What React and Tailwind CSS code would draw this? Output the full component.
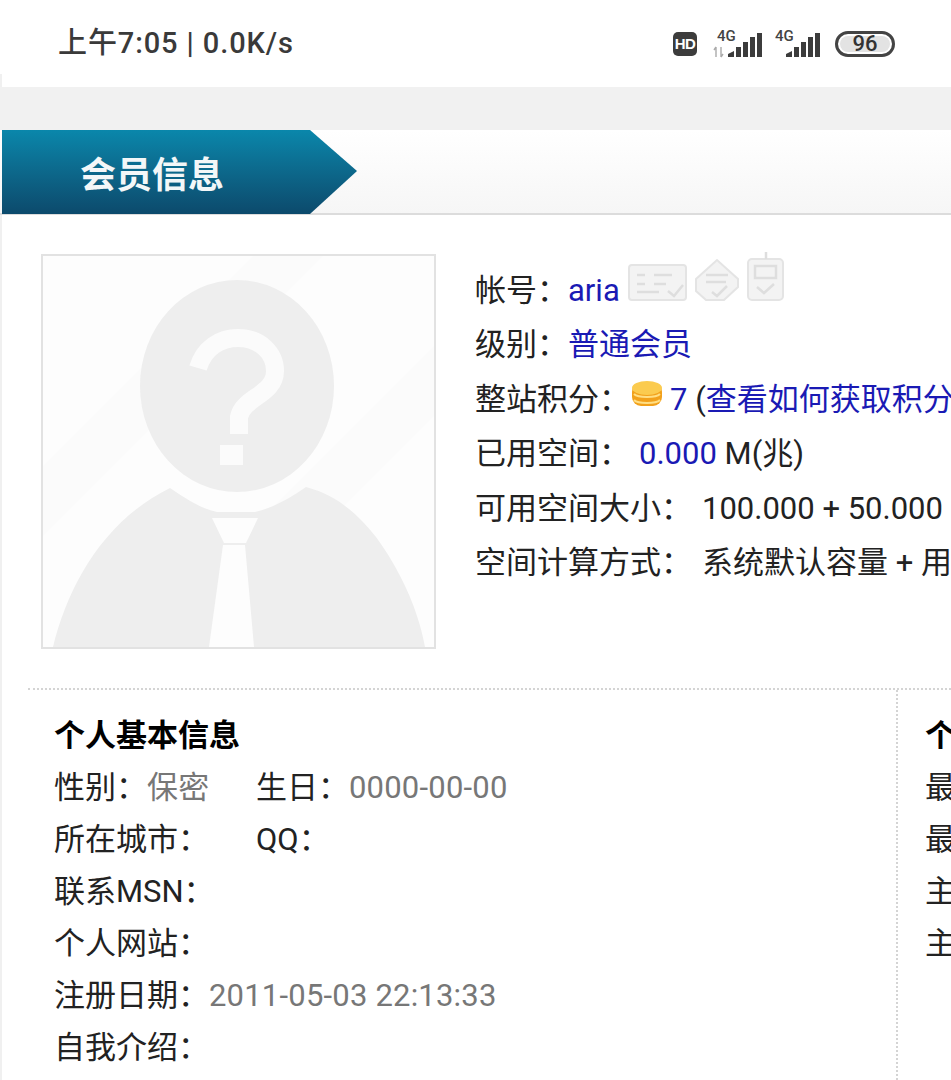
import React from 'react'

const FONT = 'font-["Roboto","Noto_Sans_CJK_SC",sans-serif]'

// signal bars with the small 4G label on top
const Signal = ({ arrows = false }) => (
  <svg width={arrows ? 50 : 46} height="28" viewBox={arrows ? '0 0 50 28' : '0 0 46 28'} className="block overflow-visible">
    <text x={arrows ? 4 : 0} y="11" fontSize="15" fontWeight="500" fill="#444" fontFamily="Roboto, sans-serif">4G</text>
    {arrows && (
      <path d="M3 27V17M1 20l2-3M8 17v10M8 27l2-3" stroke="#aaa" strokeWidth="1.4" fill="none" />
    )}
    <g fill="#3c3c3c" transform={arrows ? 'translate(14 0)' : 'translate(10 0)'}>
      <path d="M1 27v-3l6-3v6z" />
      <rect x="9" y="17" width="5" height="10" />
      <rect x="16" y="12" width="5" height="15" />
      <rect x="23" y="7" width="5" height="20" />
      <rect x="30" y="3" width="5" height="24" />
    </g>
  </svg>
)

const StatusBar = () => (
  <div className="relative h-[87px] bg-white flex items-center justify-between pl-[58px] pr-[56px]">
    <div className="absolute left-0 top-[74px] w-[2px] h-[13px] bg-[#f0f0f0]" />
    <span className="mt-[1px] text-[29px] text-[#3a3a3a] font-medium tracking-[0.9px]">上午7:05 | 0.0K/s</span>
    <div className="flex items-center">
      <span className="w-[24px] h-[24px] rounded-[5px] bg-[#3c3c3c] text-white text-[15px] font-bold leading-[24px] text-center tracking-[-0.5px] font-['Liberation_Sans',sans-serif]">HD</span>
      <span className="ml-[16px]"><Signal arrows /></span>
      <span className="ml-[12px]"><Signal /></span>
      <span className="ml-[14px] w-[60px] h-[26px] rounded-full border-[3px] border-[#444] p-[2px] flex">
        <span className="w-full rounded-full bg-[#e3e3e3] text-[#333] text-[22px] leading-[16px] text-center font-medium">96</span>
      </span>
    </div>
  </div>
)

const Banner = () => (
  <div className="h-[85px] bg-gradient-to-b from-white to-[#f6f6f6] border-b-2 border-[#dcdcdc]">
    <div className="w-[355px] h-[84px] ml-[2px] pl-[78px] pt-[8px] flex items-center bg-gradient-to-b from-[#0a87ab] to-[#0c4a6c] [clip-path:polygon(0_0,308px_0,355px_41px,308px_84px,0_84px)]">
      <span className="text-[36px] font-bold text-[#f3f7f8] leading-none">会员信息</span>
    </div>
  </div>
)

const Avatar = () => (
  <div className="w-[395px] h-[395px] border-2 border-[#e2e2e2] shrink-0">
    <svg viewBox="0 0 391 391" className="block w-full h-full bg-[#fdfdfd]">
      <path d="M0 210L210 0h70L0 280zM391 90L90 391h70L391 160z" fill="#fbfbfb" />
      <ellipse cx="194" cy="130" rx="97" ry="106" fill="#eeeeee" />
      <path d="M155 112c6-20 22-30 40-30 22 0 37 15 37 33 0 24-32 26-36 46v17" stroke="#fbfbfb" strokeWidth="18" fill="none" />
      <rect x="177" y="189" width="23" height="20" fill="#fbfbfb" />
      <path d="M10 391C25 330 60 265 127 232c18 12 30 20 47 24h38c18-4 35-14 51-25 30 8 50 25 70 50 22 30 42 70 49 110z" fill="#eeeeee" />
      <path d="M169 262h46l-12 25h-22z" fill="#fdfdfd" />
      <path d="M180 289h22l9 102h-45z" fill="#fdfdfd" />
    </svg>
  </div>
)

// faded verify badges after the account name
const VerifyIcons = () => (
  <svg width="158" height="50" viewBox="0 0 158 50" className="inline-block align-baseline ml-[8px] -mt-[24px]">
    <g fill="#f3f3f3" stroke="#e4e4e4" strokeWidth="2">
      <rect x="1" y="14" width="57" height="35" rx="3" />
      <path d="M68 28L89 9l21 19v8L96 49H78L68 40z" />
      <rect x="120" y="8" width="35" height="41" rx="4" />
    </g>
    <g stroke="#dedede" strokeWidth="2.5" fill="none">
      <path d="M9 24h8M26 24h18M9 33h8M26 33h12M9 41h22M40 40l6 5 9-11" />
      <path d="M78 24h22M78 31h20M84 41l5 4 10-10" />
      <path d="M138 8V1M127 15h21v12h-21zM129 36l7 6 10-9" />
    </g>
  </svg>
)

const Coin = () => (
  <svg width="32" height="27" viewBox="0 0 32 27" className="inline-block align-[3px] ml-[1px] mr-[7px]">
    <rect x="1" y="3" width="30" height="23" rx="9" fill="#f2a11b" />
    <ellipse cx="16" cy="8" rx="15" ry="7" fill="#fbcb4f" />
    <path d="M3 14c4 4 22 4 26 0M3 20c4 4 22 4 26 0" stroke="#ffdf85" strokeWidth="2" fill="none" />
  </svg>
)

const Blue = ({ children }) => <span className="text-[#1a1ab4]">{children}</span>
const Gray = ({ children }) => <span className="text-[#777] tracking-[0.2px]">{children}</span>

const InfoList = () => (
  <div className="ml-[39px] mt-[10px] text-[31px] leading-[54.4px] text-[#222] whitespace-nowrap">
    <div className="h-[54.4px]">帐号&#xFF1A;<Blue>aria</Blue><VerifyIcons /></div>
    <div>级别&#xFF1A;<Blue>普通会员</Blue></div>
    <div className="h-[54.4px]">整站积分&#xFF1A;<Coin /><Blue>7</Blue> (<Blue>查看如何获取积分</Blue></div>
    <div>已用空间&#xFF1A;<span className="ml-[9px]"><Blue>0.000</Blue> M(兆)</span></div>
    <div>可用空间大小&#xFF1A;<span className="ml-[10px]">100.000 + 50.000</span></div>
    <div>空间计算方式&#xFF1A;<span className="ml-[10px]">系统默认容量 + 用</span></div>
  </div>
)

const BasicInfo = () => (
  <div className="w-[870px] h-[390px] shrink-0 border-r-2 border-dotted border-[#d4d4d4] pl-[26px] pt-[20px] text-[31px] leading-[52px] text-[#222]">
    <div className="font-bold text-black">个人基本信息</div>
    <div className="grid grid-cols-[202px_1fr]">
      <div>性别&#xFF1A;<Gray>保密</Gray></div>
      <div>生日&#xFF1A;<Gray>0000-00-00</Gray></div>
      <div>所在城市&#xFF1A;</div>
      <div>QQ&#xFF1A;</div>
    </div>
    <div>联系MSN&#xFF1A;</div>
    <div>个人网站&#xFF1A;</div>
    <div>注册日期&#xFF1A;<Gray>2011-05-03 22:13:33</Gray></div>
    <div>自我介绍&#xFF1A;</div>
  </div>
)

const SideInfo = () => (
  <div className="pl-[27px] pt-[20px] text-[31px] leading-[52px] text-[#222] whitespace-nowrap">
    <div className="font-bold text-black">个</div>
    <div>最</div>
    <div>最</div>
    <div>主</div>
    <div>主</div>
  </div>
)

export default function App() {
  return (
    <div className={`w-[951px] h-[1080px] overflow-hidden bg-white ${FONT}`}>
      <StatusBar />
      <div className="h-[43px] bg-[#f1f1f1]" />
      <Banner />
      <div className="border-l-2 border-[#f0f0f0]">
        <div className="pl-[39px] pt-[39px] flex h-[473px]">
          <Avatar />
          <InfoList />
        </div>
        <div className="ml-[26px] flex border-t-2 border-dotted border-[#d4d4d4]">
          <BasicInfo />
          <SideInfo />
        </div>
      </div>
    </div>
  )
}
